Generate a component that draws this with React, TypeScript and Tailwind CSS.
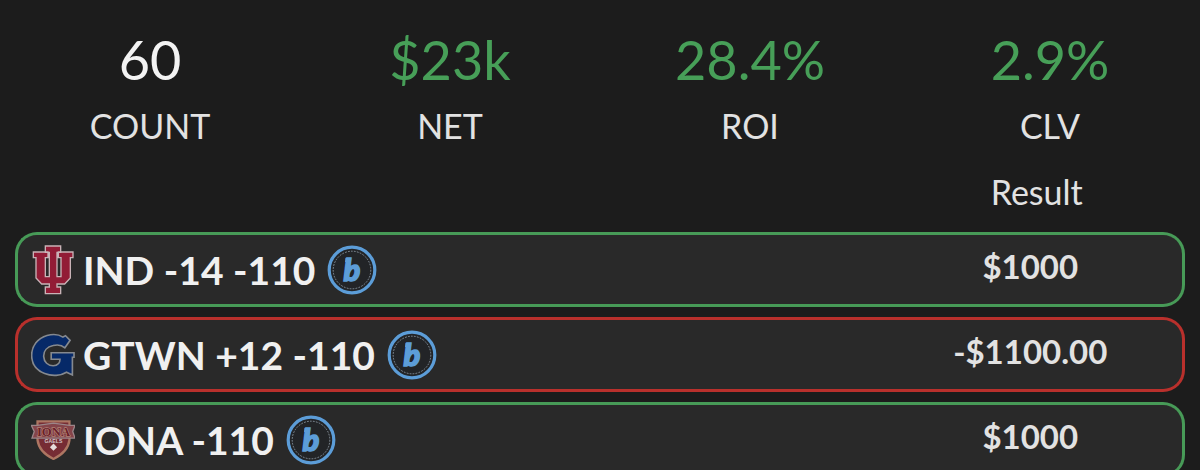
import React from "react";

type Outcome = "win" | "loss";

interface Stat {
  label: string;
  value: string;
  positive: boolean;
}

interface Bet {
  name: string;
  result: string;
  outcome: Outcome;
  logo: React.ReactNode;
}

function IndianaLogo() {
  return (
    <svg viewBox="18 12 132 153" className="h-[51px] w-11 shrink-0" role="img" aria-label="Indiana">
      <path
        d="M61 18H107V37H96V110H108V53H100V36H144V53H136V114L119 132H96V141H107V161H61V141H73V132H50L33 114V53H25V36H69V53H61V110H73V37H61Z"
        fill="#921c36"
        stroke="#c9b3b7"
        strokeWidth="4"
        strokeLinejoin="miter"
      />
    </svg>
  );
}

function GeorgetownLogo() {
  return (
    <svg viewBox="18 23 135 132" className="h-11 w-11 shrink-0" role="img" aria-label="Georgetown">
      <path
        d="M124 30L138 44L122 67C112 58 98 57 86 60C67 64 56 77 57 94C58 111 70 122 86 122C99 121 107 113 107 102H80V82H150V96H145V150L127 142C110 153 82 155 60 146C34 136 20 115 20 90C20 61 39 37 67 29C86 24 104 26 116 34Z"
        fill="#062968"
        stroke="#85898f"
        strokeWidth="5"
      />
    </svg>
  );
}

function IonaLogo() {
  return (
    <svg viewBox="17 26 135 120" className="h-10 w-11 shrink-0" role="img" aria-label="Iona">
      <path
        d="M37 29H135V86C132 111 111 132 86 144C61 132 40 111 37 86Z"
        fill="#762c34"
        stroke="#ad7662"
        strokeWidth="7"
      />
      <path
        d="M18 41H37L86 34L135 41H152L145 60L152 80H20L27 60Z"
        fill="#85444a"
        stroke="#9b8588"
        strokeWidth="4"
      />
      <text
        x="86"
        y="75"
        textAnchor="middle"
        fontFamily="Liberation Serif, serif"
        fontWeight="700"
        fontSize="39"
        fill="#6b2029"
        stroke="#c29a86"
        strokeWidth="3"
        paintOrder="stroke"
      >
        IONA
      </text>
      <text
        x="86"
        y="94"
        textAnchor="middle"
        fontFamily="Liberation Sans, sans-serif"
        fontWeight="700"
        fontSize="16"
        fill="#d0c5c7"
      >
        GAELS
      </text>
      <path d="M86 97L97 108L86 119L75 108Z" fill="#e5dcdc" />
    </svg>
  );
}

function BookBadge() {
  return (
    <svg viewBox="0 0 50 50" className="size-[50px] shrink-0" role="img" aria-label="Sportsbook">
      <circle cx="25" cy="25" r="22.8" fill="#222427" stroke="#5c9dd8" strokeWidth="3.2" />
      <circle
        cx="25"
        cy="25"
        r="18.8"
        fill="none"
        stroke="#8d9aa5"
        strokeWidth="0.9"
        strokeDasharray="1.7 1.3"
      />
      <text
        x="25"
        y="36"
        textAnchor="middle"
        fontFamily="Lato, sans-serif"
        fontWeight="900"
        fontStyle="italic"
        fontSize="31"
        fill="#5c9dd8"
        stroke="#5c9dd8"
        strokeWidth="1.6"
      >
        b
      </text>
      <path d="M18.5 13H23V17H18Z" fill="#5c9dd8" />
    </svg>
  );
}

const stats: Stat[] = [
  { label: "COUNT", value: "60", positive: false },
  { label: "NET", value: "$23k", positive: true },
  { label: "ROI", value: "28.4%", positive: true },
  { label: "CLV", value: "2.9%", positive: true },
];

const bets: Bet[] = [
  { name: "IND -14 -110", result: "$1000", outcome: "win", logo: <IndianaLogo /> },
  { name: "GTWN +12 -110", result: "-$1100.00", outcome: "loss", logo: <GeorgetownLogo /> },
  { name: "IONA -110", result: "$1000", outcome: "win", logo: <IonaLogo /> },
];

const rowBorder: Record<Outcome, string> = {
  win: "border-[#479a57]",
  loss: "border-[#b9302c]",
};

export default function App() {
  return (
    <main className="h-screen overflow-y-auto bg-[#1c1c1c] pt-7 font-['Lato',sans-serif] text-[#e2e2e2] [scrollbar-width:none]">
      <dl className="grid grid-cols-4 text-center">
        {stats.map((stat) => (
          <div key={stat.label} className="flex flex-col-reverse gap-2">
            <dt className="text-[34px] leading-[52px]">{stat.label}</dt>
            <dd
              className={`text-[54px] leading-[64px] ${stat.positive ? "text-[#479f58]" : "text-[#f3f3f3]"}`}
            >
              {stat.value}
            </dd>
          </div>
        ))}
      </dl>

      <div className="px-[15px] pt-[14px]">
        <table className="w-full table-fixed border-separate border-spacing-x-0 border-spacing-y-0">
          <thead>
            <tr>
              <th scope="col" aria-label="Bet" className="w-3/4" />
              <th scope="col" className="w-1/4 p-0 pr-1 pb-[14px] text-[34px] leading-[52px] font-normal">
                Result
              </th>
            </tr>
          </thead>
          {bets.map((bet) => (
            <tbody key={bet.name}>
              <tr>
                <td
                  className={`h-[75px] rounded-l-[22px] border-y-3 border-l-3 bg-[#292929] p-0 pl-[13px] ${rowBorder[bet.outcome]}`}
                >
                  <div className="flex items-center text-[39px] leading-[50px] font-bold text-[#f0f0f0]">
                    {bet.logo}
                    <span className="mr-3 ml-2">{bet.name}</span>
                    <BookBadge />
                  </div>
                </td>
                <td
                  className={`rounded-r-[22px] border-y-3 border-r-3 bg-[#292929] p-0 pr-[14px] pb-2 text-center text-[33px] leading-[50px] font-bold ${rowBorder[bet.outcome]}`}
                >
                  {bet.result}
                </td>
              </tr>
              <tr aria-hidden="true">
                <td colSpan={2} className="h-[10px] p-0" />
              </tr>
            </tbody>
          ))}
        </table>
      </div>
    </main>
  );
}
